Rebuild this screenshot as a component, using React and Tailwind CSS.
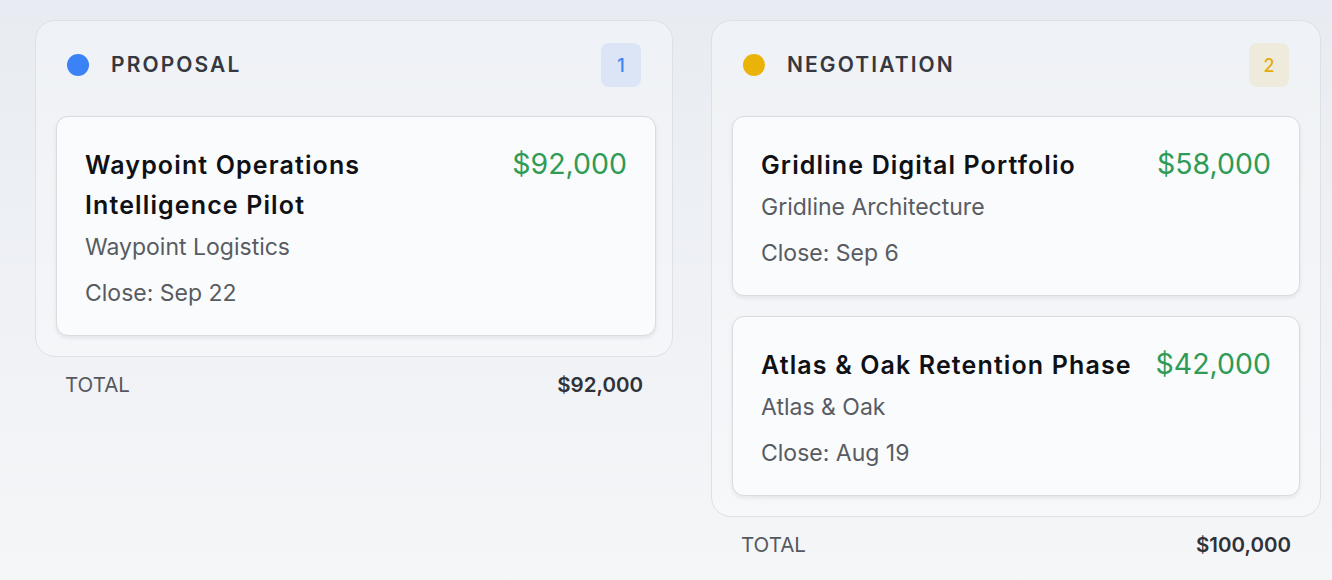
import React from "react";

const columns = [
  {
    name: "PROPOSAL",
    dot: "bg-[#3b82f6]",
    badge: "bg-[#dbe5f5] text-[#3b82f6]",
    width: "w-[638px]",
    listClass: "-mr-1",
    total: "$92,000",
    deals: [
      {
        title: "Waypoint Operations Intelligence Pilot",
        company: "Waypoint Logistics",
        close: "Close: Sep 22",
        amount: "$92,000",
      },
    ],
  },
  {
    name: "NEGOTIATION",
    dot: "bg-[#eab308]",
    badge: "bg-[#eeebdd] text-[#e2ad0a]",
    width: "w-[610px]",
    listClass: "",
    total: "$100,000",
    deals: [
      {
        title: "Gridline Digital Portfolio",
        company: "Gridline Architecture",
        close: "Close: Sep 6",
        amount: "$58,000",
      },
      {
        title: "Atlas & Oak Retention Phase",
        company: "Atlas & Oak",
        close: "Close: Aug 19",
        amount: "$42,000",
      },
    ],
  },
];

function DealCard({ deal }) {
  return (
    <div className="rounded-xl border border-[#d8dbe0] bg-[#fafbfc] px-7 pt-[27px] pb-6 shadow-[0_2px_4px_rgba(15,23,42,0.08)]">
      <div className="flex items-baseline justify-between gap-5">
        <div className="text-[25px] font-semibold leading-10 tracking-[0.045em] text-[#0f1115]">
          {deal.title}
        </div>
        <div className="shrink-0 text-[28.5px] leading-10 text-[#2f9b57]">
          {deal.amount}
        </div>
      </div>
      <div className="mt-1 text-[23px] leading-9 text-[#585c62]">{deal.company}</div>
      <div className="mt-2.5 text-[23px] leading-9 text-[#585c62]">{deal.close}</div>
    </div>
  );
}

function Column({ col }) {
  return (
    <div className={`${col.width} shrink-0`}>
      <div className="rounded-[20px] border border-[#dde1e6] bg-white/30 p-5">
        <div className="mb-[27px] flex h-12 items-center justify-between px-[11px]">
          <div className="flex items-center gap-[22px]">
            <span className={`h-[22px] w-[22px] rounded-full ${col.dot}`} />
            <span className="text-[21px] font-semibold tracking-[0.1em] text-[#35393f]">
              {col.name}
            </span>
          </div>
          <span
            className={`flex h-11 min-w-10 items-center justify-center rounded-lg px-[14px] text-[18px] font-medium ${col.badge}`}
          >
            {col.deals.length}
          </span>
        </div>
        <div className={`flex flex-col gap-5 ${col.listClass}`}>
          {col.deals.map((d) => (
            <DealCard key={d.title} deal={d} />
          ))}
        </div>
      </div>
      <div className="mt-[14px] flex items-center justify-between px-[30px] text-[20.5px] leading-7">
        <span className="text-[#55595f]">TOTAL</span>
        <span className="font-semibold text-[#2f3237]">{col.total}</span>
      </div>
    </div>
  );
}

export default function App() {
  return (
    <div
      className="min-h-[580px] w-full bg-gradient-to-b from-[#e8ecf2] to-[#f5f6f8]"
      style={{ fontFamily: "Inter, 'Noto Sans', sans-serif" }}
    >
      <div className="flex items-start gap-[38px] pl-[35px] pt-5">
        {columns.map((c) => (
          <Column key={c.name} col={c} />
        ))}
      </div>
    </div>
  );
}
